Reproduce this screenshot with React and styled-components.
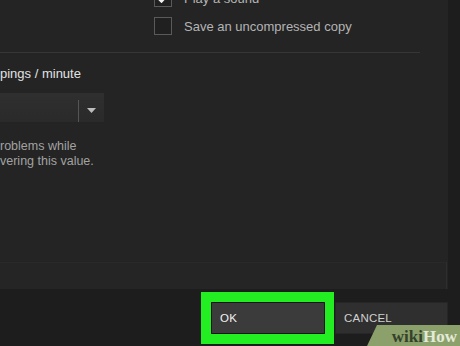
import styled, { createGlobalStyle } from "styled-components";

const GlobalStyle = createGlobalStyle`
  html, body {
    margin: 0;
    padding: 0;
    background: #1c1c1c;
    overflow: hidden;
  }
  body {
    font-family: "Liberation Sans", Arial, sans-serif;
  }
`;

// Whole screen: settings dialog, cut on the left and top

const Screen = styled.div`
  position: relative;
  width: 460px;
  height: 346px;
  display: flex;
  overflow: hidden;
  background: #1c1c1c;
`;

const Main = styled.div`
  width: 448px;
  display: flex;
  flex-direction: column;
`;

const RightEdge = styled.div`
  flex: 1;
  background: #1d1d1d;
`;

const Panel = styled.div`
  height: 289px;
  background: #242424;
  display: flex;
  flex-direction: column;
  overflow: hidden;
`;

const Options = styled.div`
  margin-top: -11px;
  padding-left: 154px;
  display: flex;
  flex-direction: column;
  gap: 10px;
`;

const OptionRow = styled.label`
  display: flex;
  align-items: center;
  gap: 12px;
  height: 18px;
  font-size: 13px;
  color: #b4b4b4;
`;

const Box = styled.span`
  width: 16px;
  height: 16px;
  border: 1px solid #5a5a5a;
  background: #202020;
  display: flex;
  align-items: center;
  justify-content: center;
`;

const Divider = styled.div`
  margin-top: 17px;
  width: 420px;
  height: 1px;
  background: #363636;
`;

const FieldLabel = styled.div`
  margin-top: 13px;
  font-size: 13px;
  color: #e2e2e2;
  line-height: 16px;
`;

const Select = styled.div`
  margin-top: 11px;
  width: 104px;
  height: 29px;
  background: linear-gradient(#2f2f2f, #2a2a2a);
  display: flex;
  align-items: center;
  justify-content: flex-end;
`;

const SelectSep = styled.span`
  width: 1px;
  height: 22px;
  margin-top: 6px;
  background: #555;
`;

const Arrow = styled.span`
  width: 25px;
  display: flex;
  justify-content: center;
  padding-top: 6px;
`;

const Note = styled.div`
  margin-top: 17px;
  font-size: 12.5px;
  line-height: 15px;
  color: #a2a2a2;
`;

const BottomBox = styled.div`
  margin-top: auto;
  height: 26px;
  width: 446px;
  border-top: 1px solid #292929;
  border-right: 1px solid #2e2e2e;
  background: #252525;
`;

const Footer = styled.div`
  flex: 1;
  background: #1d1d1d;
  display: flex;
  justify-content: flex-end;
  align-items: flex-start;
  padding-top: 3px;
`;

const Highlight = styled.div`
  border: 10px solid #22ee22;
  border-right-width: 9px;
  background: #1a1a1a;
`;

const Button = styled.div`
  box-sizing: border-box;
  width: ${(p) => p.$w}px;
  height: 32px;
  padding-left: 8px;
  display: flex;
  align-items: center;
  font-size: 11.5px;
  letter-spacing: 0.2px;
  color: ${(p) => (p.$primary ? "#f2f2f2" : "#cfcfcf")};
  background: ${(p) => (p.$primary ? "#3b3b3b" : "#2f2f2f")};
  border: 1px solid ${(p) => (p.$primary ? "#141414" : "#262626")};
  margin-top: ${(p) => (p.$primary ? 0 : 10)}px;
  margin-left: ${(p) => (p.$primary ? 0 : 1)}px;
`;

const Watermark = styled.div`
  position: absolute;
  right: 0;
  bottom: 0;
  width: 93px;
  height: 21px;
  background: #8ca06c;
  clip-path: polygon(10px 0, 100% 0, 100% 100%, 0 100%);
  display: flex;
  align-items: center;
  justify-content: flex-end;
  padding-right: 3px;
  padding-top: 2px;
  box-sizing: border-box;
  font-family: "Liberation Serif", "DejaVu Serif", serif;
  font-weight: bold;
  font-size: 17px;
`;

const Wiki = styled.span`
  color: #34422a;
`;

const How = styled.span`
  color: #e4ead8;
`;

function Check({ checked }) {
  return (
    <Box>
      {checked && (
        <svg width="12" height="10" viewBox="0 0 12 10">
          <path d="M1 5 L4.5 8.5 L11 1.5" stroke="#f0f0f0" strokeWidth="2.4" fill="none" />
        </svg>
      )}
    </Box>
  );
}

export default function App() {
  return (
    <>
      <GlobalStyle />
      <Screen>
        <Main>
          <Panel>
            <Options>
              <OptionRow>
                <Check checked />
                Play a sound
              </OptionRow>
              <OptionRow>
                <Check />
                Save an uncompressed copy
              </OptionRow>
            </Options>
            <Divider />
            <FieldLabel>pings / minute</FieldLabel>
            <Select>
              <SelectSep />
              <Arrow>
                <svg width="9" height="5" viewBox="0 0 9 5">
                  <path d="M0 0 H9 L4.5 5 Z" fill="#bdbdbd" />
                </svg>
              </Arrow>
            </Select>
            <Note>
              roblems while
              <br />
              vering this value.
            </Note>
            <BottomBox />
          </Panel>
          <Footer>
            <Highlight>
              <Button $primary $w={114}>OK</Button>
            </Highlight>
            <Button $w={113}>CANCEL</Button>
          </Footer>
        </Main>
        <RightEdge />
        <Watermark>
          <Wiki>wiki</Wiki>
          <How>How</How>
        </Watermark>
      </Screen>
    </>
  );
}
